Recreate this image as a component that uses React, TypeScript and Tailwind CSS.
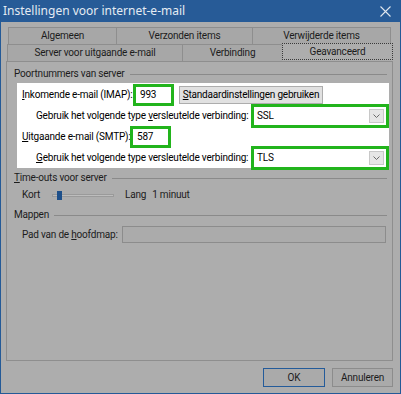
import React from 'react';

const Chevron = () => (
    <svg width="7" height="4" viewBox="0 0 7 4" className="block">
        <polyline points="0.5,0.5 3.5,3.5 6.5,0.5" fill="none" stroke="#6b6b6b" strokeWidth="1" />
    </svg>
);

const Header = ({ children }: { children: React.ReactNode }) => (
    <div className="flex items-center h-[14px] pl-[7px] pr-[5px]">
        <span>{children}</span>
        <div className="flex-1 ml-[5px] h-[1px] bg-[#8a8a8a]" />
    </div>
);

const SelectBox = ({ value }: { value: string }) => (
    <div className="shrink-0 w-[138px] h-[24px] border-[3px] border-[#22b41c] bg-white flex items-center">
        <span className="flex-1 pl-[3px] text-black">{value}</span>
        <div className="w-[15px] h-[14px] mr-[2px] bg-[#e6e6e6] border border-[#c8c8c8] flex items-center justify-center">
            <Chevron />
        </div>
    </div>
);

export default function App() {
    return (
        <div
            className="w-[401px] h-[394px] flex flex-col bg-[#adadad] border-x border-b border-[#245a97] text-[10px] tracking-[-0.2px] leading-none text-[#1c1c1c] whitespace-nowrap"
            style={{ fontFamily: 'Roboto, "Noto Sans", sans-serif' }}
        >
            {/* title bar */}
            <div
                className="h-[22px] bg-[#275b97] flex items-center justify-between pl-[2px] pr-[9px] text-[12px] tracking-normal text-[#e4ebf3]"
                style={{ fontFamily: '"Noto Sans", sans-serif' }}
            >
                <span>Instellingen voor internet-e-mail</span>
                <svg width="11" height="11" viewBox="0 0 11 11">
                    <path d="M0.5 0.5 L10.5 10.5 M10.5 0.5 L0.5 10.5" stroke="#dfe6ee" strokeWidth="1.1" />
                </svg>
            </div>

            <div className="flex-1 flex flex-col pt-[5px] pl-[5px] pr-[7px] pb-[6px]">
                {/* tabs */}
                <div className="flex flex-col h-[34px]">
                    <div className="flex h-[17px] mx-[2px]">
                        <div className="w-[108px] flex items-center justify-center bg-[#a7a7a7] border-t border-l border-[#8e8e8e]">Algemeen</div>
                        <div className="w-[136px] flex items-center justify-center bg-[#a7a7a7] border-t border-l border-[#8e8e8e]">Verzonden items</div>
                        <div className="flex-1 flex items-center justify-center bg-[#a7a7a7] border-t border-x border-[#8e8e8e]">Verwijderde items</div>
                    </div>
                    <div className="flex h-[17px] ml-[1px]">
                        <div className="w-[175px] flex items-center justify-center bg-[#a7a7a7] border-t border-l border-[#8e8e8e]">Server voor uitgaande e-mail</div>
                        <div className="w-[100px] flex items-center justify-center bg-[#a7a7a7] border-t border-l border-[#8e8e8e]">Verbinding</div>
                        <div className="w-[111px] -mt-[1px] h-[17px] flex items-center justify-center bg-[#adadad] border border-dotted border-[#3a3a3a]">Geavanceerd</div>
                    </div>
                </div>

                {/* panel */}
                <div className="h-[300px] border border-[#8e8e8e] flex flex-col">
                    <div className="mt-[5px]">
                        <Header>Poortnummers van server</Header>
                    </div>

                    <div className="mt-[2px] ml-[10px] mr-[3px] h-[85px] bg-white pt-[1px] text-black">
                        <div className="h-[21px] flex items-center">
                            <span className="ml-[5px] w-[111px] shrink-0"><u>I</u>nkomende e-mail (IMAP):</span>
                            <div className="shrink-0 w-[41px] h-[22px] border-[3px] border-[#22b41c] bg-white flex items-center pl-[4px]">993</div>
                            <div className="shrink-0 ml-[5px] w-[144px] h-[18px] bg-[#e1e1e1] border border-[#adadad] flex items-center justify-center">
                                <span><u>S</u>tandaardinstellingen gebruiken</span>
                            </div>
                        </div>
                        <div className="h-[21px] flex items-center">
                            <span className="ml-[19px] w-[215px] shrink-0">Gebruik het volgende type <u>v</u>ersleutelde verbinding:</span>
                            <SelectBox value="SSL" />
                        </div>
                        <div className="h-[21px] flex items-center">
                            <span className="ml-[5px] w-[108px] shrink-0"><u>U</u>itgaande e-mail (SMTP):</span>
                            <div className="shrink-0 w-[41px] h-[22px] border-[3px] border-[#22b41c] bg-white flex items-center pl-[4px]">587</div>
                        </div>
                        <div className="h-[21px] flex items-center">
                            <span className="ml-[19px] w-[215px] shrink-0"><u>G</u>ebruik het volgende type versleutelde verbinding:</span>
                            <SelectBox value="TLS" />
                        </div>
                    </div>

                    <div className="mt-[3px]">
                        <Header><u>T</u>ime-outs voor server</Header>
                    </div>
                    <div className="mt-[2px] h-[16px] flex items-center pl-[15px]">
                        <span className="w-[30px]">Kort</span>
                        <div className="relative w-[62px] h-[3px] bg-[#bdbdbd] border border-[#9a9a9a]">
                            <div className="absolute left-[4px] -top-[4px] w-[5px] h-[9px] bg-[#1d4f8a]" />
                        </div>
                        <span className="ml-[11px]">Lang</span>
                        <span className="ml-[6px]">1 minuut</span>
                    </div>

                    <div className="mt-[5px]">
                        <Header>Mappen</Header>
                    </div>
                    <div className="mt-[4px] h-[17px] flex items-center pl-[15px]">
                        <span className="w-[100px] shrink-0">Pad van de <u>h</u>oofdmap:</span>
                        <div className="w-[264px] h-[17px] bg-[#ababab] border border-[#8c8c8c]" />
                    </div>
                </div>

                {/* buttons */}
                <div className="mt-[7px] flex justify-end gap-[7px]">
                    <div className="w-[62px] h-[19px] border border-[#245b9a] bg-[#aaaaaa] flex items-center justify-center">OK</div>
                    <div className="w-[61px] h-[19px] border border-[#8c8c8c] bg-[#aaaaaa] flex items-center justify-center">Annuleren</div>
                </div>
            </div>
        </div>
    );
}
